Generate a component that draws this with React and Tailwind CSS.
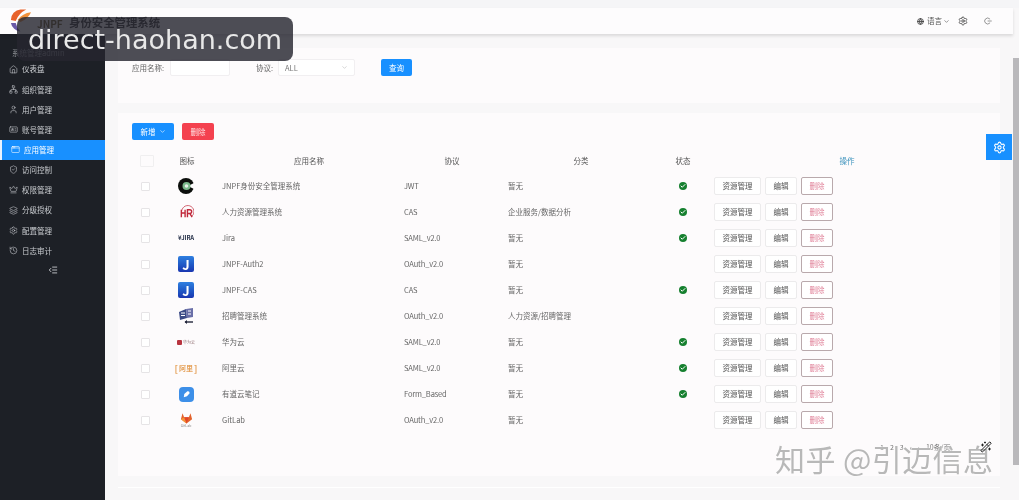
import React from "react";
import { Home, Network, User, IdCard, AppWindow, ShieldCheck, Crown, Layers, Settings, History, IndentDecrease, Globe, ChevronDown, Power, Check, WandSparkles } from "lucide-react";

const menu = [
  [Home, "仪表盘"], [Network, "组织管理"], [User, "用户管理"], [IdCard, "账号管理"], [AppWindow, "应用管理"],
  [ShieldCheck, "访问控制"], [Crown, "权限管理"], [Layers, "分级授权"], [Settings, "配置管理"], [History, "日志审计"],
];

const IconC = () => (
  <svg viewBox="0 0 16 16" className="h-[16px] w-[16px]">
    <circle cx="8" cy="8" r="8" fill="#0c0f0c" />
    <path d="M16 5 L10 8 L16 11 Z" fill="#fdfbfc" />
    <circle cx="8.5" cy="8" r="4" fill="#79b98a" />
    <circle cx="8.5" cy="8" r="1.8" fill="#e6f2e8" />
  </svg>
);
const IconHR = () => (
  <svg viewBox="0 0 16 16" className="h-[15px] w-[15px]" fill="none" stroke="#c0283a">
    <path d="M3 6 A6.5 6.5 0 1 1 13 12.5" strokeWidth="1" opacity="0.75" />
    <path d="M2.5 5v8M2.5 8.5h4M6.5 5v8M9 13V5h2.5a2 2 0 0 1 0 4H9M11.5 9l2.5 4" strokeWidth="1.5" />
  </svg>
);
const IconJira = () => <span className="text-[6px] font-bold leading-none tracking-tight text-[#27324a]">¥JIRA</span>;
const IconJ = () => (
  <div className="flex h-[16px] w-[16px] items-center justify-center rounded-[2px] bg-gradient-to-b from-[#2f7fe0] to-[#1a35b0] text-[13px] font-bold leading-none text-white">J</div>
);
const IconRecruit = () => (
  <svg viewBox="0 0 18 18" className="h-[18px] w-[18px]">
    <path d="M2 5 L9 2 L10 11 L3 13 Z" fill="#3b4a86" />
    <path d="M9 2 L16 1 L16 10 L10 11 Z" fill="#6a6fa8" />
    <path d="M4 6h4M4 8.5h4M11 4h3M11 7h3" stroke="#fff" strokeWidth="1.1" />
    <path d="M8 15h8" stroke="#20243a" strokeWidth="1.4" />
    <path d="M10 13 L7.5 15 L10 17 Z" fill="#20243a" />
  </svg>
);
const IconHuawei = () => (
  <div className="flex items-center gap-[1px]">
    <div className="h-[5px] w-[5px] rounded-[1px] bg-[#b8343f]" />
    <span className="text-[4px] leading-none text-[#8d6a6e]">华为云</span>
  </div>
);
const IconAli = () => (
  <div className="flex items-center gap-[1px] text-[#e6a35c]">
    <span className="text-[9px] font-bold leading-none">[</span>
    <span className="text-[7px] font-bold leading-none">阿里</span>
    <span className="text-[9px] font-bold leading-none">]</span>
  </div>
);
const IconYoudao = () => (
  <div className="flex h-[15px] w-[15px] items-center justify-center rounded-[4px] bg-[#3d8fe8]">
    <svg viewBox="0 0 10 10" className="h-[9px] w-[9px]"><path d="M2 8 L2.5 4.5 L6 1.5 Q8.5 1 8.5 3.5 L5.5 7 Z" fill="#fff" /></svg>
  </div>
);
const IconGit = () => (
  <div className="flex flex-col items-center">
    <svg viewBox="0 0 16 15" className="h-[12px] w-[13px]">
      <path d="M8 14.5 L1 9 L3 1.5 L5 6.5 H11 L13 1.5 L15 9 Z" fill="#e2622c" />
      <path d="M8 14.5 L5 6.5 H11 Z" fill="#e24329" />
      <path d="M1 9 L5 6.5 L8 14.5 Z" fill="#f9a13a" opacity="0.8" />
    </svg>
    <span className="text-[3.5px] leading-none text-[#888]">GitLab</span>
  </div>
);

const rows = [
  [IconC, "JNPF身份安全管理系统", "JWT", "暂无", true],
  [IconHR, "人力资源管理系统", "CAS", "企业服务/数据分析", true],
  [IconJira, "Jira", "SAML_v2.0", "暂无", true],
  [IconJ, "JNPF-Auth2", "OAuth_v2.0", "暂无", false],
  [IconJ, "JNPF-CAS", "CAS", "暂无", true],
  [IconRecruit, "招聘管理系统", "OAuth_v2.0", "人力资源/招聘管理", false],
  [IconHuawei, "华为云", "SAML_v2.0", "暂无", true],
  [IconAli, "阿里云", "SAML_v2.0", "暂无", true],
  [IconYoudao, "有道云笔记", "Form_Based", "暂无", true],
  [IconGit, "GitLab", "OAuth_v2.0", "暂无", false],
];

const cols = "grid grid-cols-[26px_58px_186px_100px_158px_46px_282px] items-center";

export default function App() {
  return (
    <div className="relative flex h-[500px] w-[1019px] flex-col overflow-hidden bg-[#f8f7f8] font-['Noto_Sans_CJK_SC','Noto_Sans',sans-serif] text-[7.5px] text-[#666] blur-[0.35px]">
      <div className="h-[8px] shrink-0 bg-[#f5f5f7]" />
      <header className="z-10 mr-[6px] flex h-[26px] shrink-0 items-center bg-[#fdfcfd] shadow-[0_2px_3px_rgba(0,0,0,0.12)]">
        <svg viewBox="0 0 24 26" className="ml-[9px] h-[26px] w-[23px] -translate-y-[1px]">
          <path d="M2 13 A11 11 0 0 1 12 2 L18 2 Q10 6 7 14 Z" fill="#e8622a" />
          <path d="M9 13 Q14 6 23 5 Q20 12 12 15 Z" fill="#f0903a" />
          <path d="M2 16 A11 11 0 0 0 12 25 Q8 21 7 16 Z" fill="#6a5aa8" />
        </svg>
        <span className="ml-[5px] mt-[4px] w-[28px] text-[10px] font-bold text-[#6b5a2a]">JNPF</span>
        <span className="ml-[4px] mt-[4px] text-[11.4px] font-bold leading-none text-[#333]">身份安全管理系统</span>
        <div className="ml-auto flex items-center text-[#555]">
          <Globe size={7} strokeWidth={3} className="text-[#444]" />
          <span className="ml-[3px] text-[7.5px]">语言</span>
          <ChevronDown size={7} className="ml-[1px]" />
          <Settings size={10} className="ml-[8px] text-[#444]" />
          <Power size={8} className="ml-[16px] mr-[21px] rotate-90 text-[#666]" />
        </div>
      </header>

      <div className="flex min-h-0 flex-1">
        <aside className="flex w-[105px] shrink-0 flex-col bg-[#1d2026] text-[#c9ccd0]">
          <div className="flex h-[25px] shrink-0 items-center pl-[12px] pt-[12px] text-[#8b8e93]">系统管理admin</div>
          {menu.map(([Icon, label], i) => (
            <div key={label} className={`flex h-[20.15px] shrink-0 items-center pl-[9px] ${i === 4 ? "border-l-2 border-[#e8f3ff] bg-[#1890ff] pl-[7px] text-white" : ""}`}>
              <Icon size={9} strokeWidth={1.5} />
              <span className="ml-[4px]">{label}</span>
            </div>
          ))}
          <div className="flex h-[20px] items-center justify-center">
            <IndentDecrease size={10} className="text-[#d8dadd]" />
          </div>
        </aside>

        <main className="flex min-w-0 flex-1 flex-col pl-[13px] pr-[19px] pt-[14px]">
          <section className="flex h-[55px] shrink-0 items-start bg-[#fdfbfc] pl-[14px] pt-[11px]">
            <div className="flex h-[17px] items-center">
              <span className="w-[38px]">应用名称:</span>
              <div className="h-[17px] w-[60px] rounded-[2px] border border-[#f1eff1] bg-white" />
              <span className="ml-[26px] w-[22px]">协议:</span>
              <div className="flex h-[17px] w-[77px] items-center justify-between rounded-[2px] border border-[#f1eff1] bg-white px-[6px]">
                <span className="text-[#777]">ALL</span>
                <ChevronDown size={7} className="text-[#bbb]" />
              </div>
              <div className="ml-[26px] flex h-[17px] w-[31px] items-center justify-center rounded-[2px] bg-[#1890ff] text-white">查询</div>
            </div>
          </section>

          <section className="relative mt-[10px] h-[363px] shrink-0 bg-[#fdfbfc] pl-[14px] pt-[10px]">
            <div className="flex gap-[8px]">
              <div className="flex h-[17px] w-[42px] items-center justify-center gap-[3px] rounded-[2px] bg-[#1890ff] text-white">
                新增 <ChevronDown size={7} />
              </div>
              <div className="flex h-[17px] w-[32px] items-center justify-center rounded-[2px] bg-[#f4414f] text-[#ffe3e5]">删除</div>
            </div>

            <div className={`${cols} mt-[8px] h-[25px] text-[#555]`}>
              <div className="ml-[8px] h-[12px] w-[14px] rounded-[1px] border border-[#f0eff0]" />
              <div className="text-center">图标</div>
              <div className="text-center">应用名称</div>
              <div className="text-center">协议</div>
              <div className="text-center">分类</div>
              <div className="text-center">状态</div>
              <div className="text-center text-[#3d93bd]">操作</div>
            </div>

            {rows.map(([Icon, name, proto, cat, ok], i) => (
              <div key={i} className={`${cols} h-[26px]`}>
                <div className="ml-[9px] h-[9px] w-[9px] rounded-[1px] border border-[#e6e4e6] bg-white" />
                <div className="flex items-center justify-center pr-[2px]"><Icon /></div>
                <div className="pl-[6px]">{name}</div>
                <div className="pl-[2px] tracking-[-0.15px]">{proto}</div>
                <div className="pl-[6px]">{cat}</div>
                <div className="flex justify-center">
                  {ok && (
                    <div className="flex h-[8px] w-[8px] items-center justify-center rounded-full bg-[#16802f]">
                      <Check size={6} strokeWidth={4} className="text-white" />
                    </div>
                  )}
                </div>
                <div className="flex items-center gap-[4px] pl-[8px]">
                  <div className="flex h-[18px] w-[47px] items-center justify-center rounded-[2px] border border-[#ecebec] bg-white text-[#555]">资源管理</div>
                  <div className="flex h-[18px] w-[32px] items-center justify-center rounded-[2px] border border-[#ecebec] bg-white text-[#555]">编辑</div>
                  <div className="flex h-[18px] w-[32px] items-center justify-center rounded-[2px] border border-[#b9a9ac] bg-white text-[#e08098]">删除</div>
                </div>
              </div>
            ))}
          </section>

          <div className="mt-[11px] h-px shrink-0 bg-white" />
        </main>
      </div>

      <div className="absolute right-0 top-[58px] h-[407px] w-[6px] bg-[#b9b8bb]" />

      <div className="absolute left-[986px] top-[134px] flex h-[26px] w-[26px] items-center justify-center bg-[#1890ff]">
        <Settings size={13} className="text-white" />
      </div>

      <div className="absolute left-[880px] top-[442px] flex gap-[6px] text-[7px] text-[#777]">
        <span>1</span><span>2</span><span>3</span><span>‹</span><span>›</span><span>10条/页</span>
      </div>

      <div className="absolute left-[775px] top-[438px] whitespace-nowrap font-['Noto_Sans_CJK_SC',sans-serif] text-[30px] font-normal leading-[40px] tracking-[0.4px] text-[#b8b8b8] [text-shadow:0_0_2px_#fff]">
        知乎 @引迈信息
      </div>

      <WandSparkles size={12} className="absolute left-[980px] top-[441px] text-[#222]" />

      <div className="absolute left-[17px] top-[17px] z-20 flex h-[44px] w-[276px] items-center justify-center rounded-[8px] bg-[rgba(38,38,48,0.82)] font-['DejaVu_Sans',sans-serif] text-[27px] leading-none text-[#e8e8e8]">
        direct-haohan.com
      </div>
    </div>
  );
}
